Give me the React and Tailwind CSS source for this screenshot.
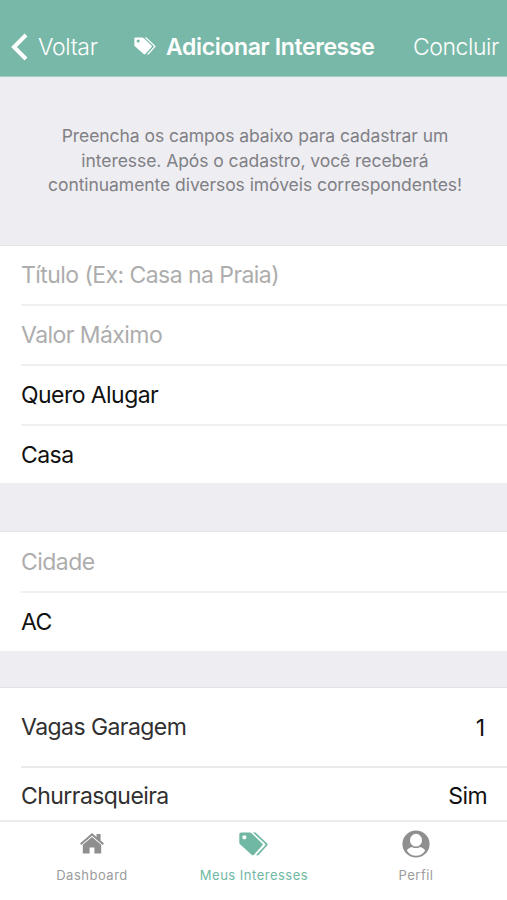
import React from 'react';

const TagsIcon = ({ className }) => (
  <svg viewBox="0 0 29 24" fill="currentColor" className={className}>
    <path
      fillRule="evenodd"
      d="M2 0.5H10.8Q11.8 0.5 12.5 1.2L23.2 11.4Q24.2 12.4 23.2 13.6L15 22.7Q13.8 23.8 12.6 22.7L1 12.3Q0.3 11.5 0.3 10.5V2.2Q0.3 0.5 2 0.5ZM5.4 3.2A2.1 2.1 0 1 0 5.4 7.4A2.1 2.1 0 1 0 5.4 3.2Z"
    />
    <path d="M13.8 0.5H16.5L28.2 11.5Q29 12.4 28.2 13.4L19.6 23.1Q18.5 23.9 17.2 23.1L26 13.4Q26.6 12.5 25.8 11.6Z" />
  </svg>
);

const HomeIcon = ({ className }) => (
  <svg viewBox="0 0 24 21" fill="currentColor" className={className}>
    <path d="M12 0L16.6 4V1H20.6V7.5L24 10.5L22.7 12L12 2.8L1.3 12L0 10.5Z" />
    <path d="M12 3.9L21.2 11.8V20.5H14.4V14.5H9.6V20.5H2.8V11.8Z" />
  </svg>
);

const ContactIcon = ({ className }) => (
  <svg viewBox="0 0 28 28" className={className}>
    <circle cx="14" cy="14" r="13.6" fill="currentColor" />
    <path
      d="M4.8 20.4C5.7 18.5 8 17.5 10 16.9C12.2 18.5 15.8 18.5 18 16.9C20 17.5 22.3 18.5 23.2 20.4C21.2 23.8 17.8 25.7 14 25.7S6.8 23.8 4.8 20.4Z"
      fill="white"
    />
    <ellipse cx="14" cy="10.2" rx="6" ry="6.4" fill="white" />
  </svg>
);

const Row = ({ children, placeholder, last }) => (
  <div
    className={`ml-[21px] flex items-center ${last ? 'h-[59px]' : 'h-[60px] border-b-2 border-[#f0f0f1]'} ${
      placeholder ? 'text-[#adadad]' : 'text-[#111111]'
    }`}
  >
    <span className="text-[23px] tracking-[-0.56px] whitespace-nowrap">{children}</span>
  </div>
);

const Tab = ({ icon, label, active }) => (
  <div className={`flex w-[162px] flex-col items-center ${active ? 'text-[#70b8a4]' : 'text-[#8f8f8f]'}`}>
    <div className="flex h-[43px] items-center justify-center">{icon}</div>
    <span
      className={`pl-px text-[13px] leading-5 tracking-[0.5px] whitespace-nowrap ${active ? '' : 'text-[#9c9c9c]'}`}
    >
      {label}
    </span>
  </div>
);

export default function App() {
  return (
    <div className="flex h-[900px] w-[507px] flex-col overflow-hidden bg-[#eeedf2] font-['Inter',sans-serif]">
      <header className="flex h-[77px] shrink-0 items-end border-b border-[#a2cec1] bg-[#78b8a8] pb-[13px] text-white">
        <div className="flex h-8 w-[134px] items-center pl-[11px]">
          <svg viewBox="0 0 17 28" className="mr-[10px] h-7 w-[17px]" fill="none" stroke="currentColor" strokeWidth="4">
            <path d="M15 2L3 14L15 26" />
          </svg>
          <span className="text-[23px] font-light tracking-[-0.35px]">Voltar</span>
        </div>
        <div className="flex h-8 w-[279px] items-center">
          <TagsIcon className="mr-[10px] mb-[3px] h-[18px] w-[22px]" />
          <span className="text-[23px] font-semibold tracking-[-0.37px] whitespace-nowrap">Adicionar Interesse</span>
        </div>
        <span className="text-[23px] leading-8 font-light tracking-[-0.45px]">Concluir</span>
      </header>

      <p className="h-[168px] shrink-0 pt-[47px] pl-[3px] text-center text-[17.5px] leading-[24.5px] tracking-[-0.06px] text-[#808085]">
        Preencha os campos abaixo para cadastrar um
        <br />
        interesse. Após o cadastro, você receberá
        <br />
        continuamente diversos imóveis correspondentes!
      </p>

      <section className="h-[238px] shrink-0 border-t border-[#e3e3e6] bg-white">
        <Row placeholder>Título (Ex: Casa na Praia)</Row>
        <Row placeholder>Valor Máximo</Row>
        <Row>Quero Alugar</Row>
        <Row last>Casa</Row>
      </section>

      <section className="mt-12 h-[120px] shrink-0 border-t border-[#e3e3e6] bg-white pt-px">
        <Row placeholder>Cidade</Row>
        <Row last>AC</Row>
      </section>

      <section className="mt-9 h-[133px] shrink-0 border-t border-[#e3e3e6] bg-white text-[23px] text-[#303030]">
        <div className="ml-[21px] flex h-20 items-center justify-between border-b-2 border-[#eaeaeb] pt-px pr-[22px]">
          <span className="tracking-[-0.56px]">Vagas Garagem</span>
          <span className="pt-px text-[#111111]">1</span>
        </div>
        <div className="ml-[21px] flex h-[56px] items-center justify-between pr-[20px]">
          <span className="tracking-[-0.56px]">Churrasqueira</span>
          <span className="pt-px tracking-[-0.6px] text-[#111111]">Sim</span>
        </div>
      </section>

      <nav className="flex h-20 shrink-0 justify-center border-t-2 border-[#ebebec] bg-white">
        <Tab icon={<HomeIcon className="h-[21px] w-6" />} label="Dashboard" />
        <Tab icon={<TagsIcon className="h-6 w-[29px]" />} label="Meus Interesses" active />
        <Tab icon={<ContactIcon className="h-7 w-7" />} label="Perfil" />
      </nav>
    </div>
  );
}
